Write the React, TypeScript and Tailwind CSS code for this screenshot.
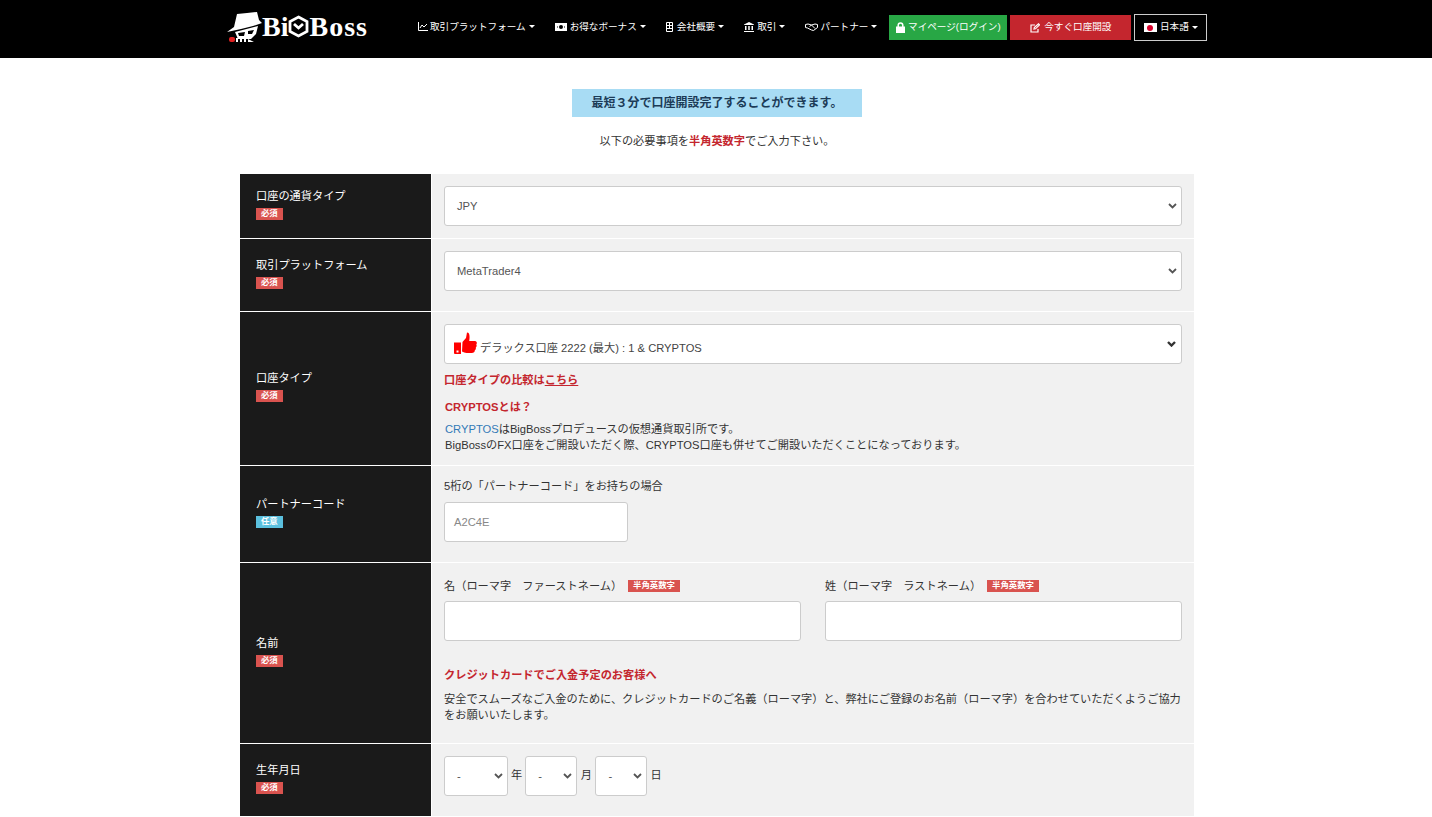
const font = "font-['Liberation_Sans','Noto_Sans_CJK_JP',sans-serif]";

function Badge({ children, color = "bg-[#d9534f]" }: { children: React.ReactNode; color?: string }) {
  return (
    <span className={`${color} inline-block h-[12px] px-[5px] text-[8.4px] leading-[11px] font-bold text-white`}>
      {children}
    </span>
  );
}

function Caret() {
  return <span className="ml-[3px] inline-block h-0 w-0 border-x-[3px] border-t-[3px] border-x-transparent border-t-white align-middle" />;
}

function NavItem({ icon, label }: { icon: React.ReactNode; label: string }) {
  return (
    <a className="flex items-center text-[9.6px] text-white">
      {icon}
      {label}
      <Caret />
    </a>
  );
}

function Chevron({ dark }: { dark?: boolean }) {
  return (
    <svg width="9" height="6" viewBox="0 0 9 6" fill="none" stroke={dark ? "#333333" : "#555555"} strokeWidth={dark ? 2.4 : 1.8}>
      <path d="M1 1l3.500 3.500L8 1" />
    </svg>
  );
}

function Select({ value, w = "" }: { value: string; w?: string }) {
  return (
    <div className={`${w} flex h-10 items-center justify-between rounded-[3px] border border-[#cccccc] bg-white pl-[12px] pr-[4px] text-[11.2px] text-[#555555]`}>
      <span>{value}</span>
      <Chevron />
    </div>
  );
}

function Row({ label, badge, children, h, optional }: { label: string; badge: string; children: React.ReactNode; h: string; optional?: boolean }) {
  return (
    <div className={`flex ${h} border-b border-white`}>
      <div className="flex w-[191px] shrink-0 flex-col justify-center bg-[#1a1a1a] pb-[4px] pl-[16px]">
        <div className="mb-[5px] text-[11.2px] leading-[14px] text-white">{label}</div>
        <div className="flex leading-none">
          <Badge color={optional ? "bg-[#5bc0de]" : "bg-[#d9534f]"}>{badge}</Badge>
        </div>
      </div>
      <div className="ml-px flex-1 bg-[#f1f1f1] px-[12px] pt-[12px]">{children}</div>
    </div>
  );
}

export default function App() {
  return (
    <div className={`${font} h-[817px] w-full overflow-hidden bg-white text-[#333333]`}>
      <header className="flex h-[58px] items-center bg-black">
        <div className="ml-[227px] flex w-[140px] items-center pb-[5px]">
          <svg width="35" height="32" viewBox="0 0 35 32" className="shrink-0">
            <path d="M10 3 L20 2 L30 1 L32 9 L35 12 L26 15 L14 18 L0 21 L7 16 Z" fill="#fff" />
            <path d="M8 21 L31 15 L29 23 L24 28 L11 28 Z" fill="#fff" />
            <path d="M11 22 L18 21 L17 25 L12 25 Z M21 20 L27 19 L25 23 L21 23 Z" fill="#000" />
            <rect x="2" y="26" width="6" height="5" rx="2" fill="#e02020" />
            <path d="M9 27h2v4H9zM13 28h2v3h-2zM17 28h2v3h-2zM21 28l6 3h-6z" fill="#fff" />
          </svg>
          <span className="font-['Liberation_Serif'] text-[28px] font-bold leading-none text-white">Bi</span>
          <svg width="21" height="23" viewBox="0 0 21 23" className="shrink-0">
            <path d="M10.500 2 L19 6.500 L19 16.500 L10.500 21 L2 16.500 L2 6.500 Z M6 9 L10.500 13 L15 9" fill="none" stroke="#fff" strokeWidth="2.800" />
          </svg>
          <span className="font-['Liberation_Serif'] text-[28px] font-bold leading-none tracking-[1px] text-white">Boss</span>
        </div>
        <nav className="ml-[51px] flex items-center pb-[3px]">
          <div className="mb-[1px] flex items-center gap-[20px]">
            <NavItem
              label="取引プラットフォーム"
              icon={
                <svg width="10" height="9" viewBox="0 0 10 9" fill="none" stroke="#fff" className="mr-[2px]">
                  <path d="M.5 0v8.500H10M2 6l2-3 2 2 3-3" />
                </svg>
              }
            />
            <NavItem
              label="お得なボーナス"
              icon={
                <svg width="12" height="8" viewBox="0 0 12 8" className="mr-[3px]">
                  <path d="M0 0h12v8H0z" fill="#fff" />
                  <circle cx="6" cy="4" r="2" fill="#000" />
                  <path d="M2 3.500h1v1H2zM9 3.500h1v1H9z" fill="#000" />
                </svg>
              }
            />
            <NavItem
              label="会社概要"
              icon={
                <svg width="7" height="10" viewBox="0 0 7 10" className="mr-[4px]" fill="none" stroke="#fff">
                  <path d="M.5.500h6v9h-6zM.5 3.500h6M.5 6.500h6M3.500.500v6" />
                </svg>
              }
            />
            <NavItem
              label="取引"
              icon={
                <svg width="10" height="10" viewBox="0 0 10 10" fill="#fff" className="mr-[3px]">
                  <path d="M5 0l5 2.500V3H0v-.5zM1 4h1.500v4H1zM4.250 4h1.500v4h-1.500zM7.500 4H9v4H7.500zM0 9h10v1H0z" />
                </svg>
              }
            />
            <NavItem
              label="パートナー"
              icon={
                <svg width="13" height="8" viewBox="0 0 13 8" fill="none" stroke="#fff" className="mr-[2px]">
                  <path d="M.5 1.500L3 1l3.500 1L10 1l2.500.5v3L8.500 7.500 6.500 7 2.500 5 .5 4.500zM4.500 3.500l2-1.500 3.500 3.500" />
                </svg>
              }
            />
          </div>
          <a className="ml-[12px] flex h-[25px] w-[118px] items-center justify-center bg-[#28a745] text-[9.6px] text-white">
            <svg width="9" height="11" viewBox="0 0 9 11" className="mr-[3px]">
              <path d="M0 4.500h9V11H0z" fill="#fff" />
              <path d="M2.200 5V3.200a2.300 2.300 0 0 1 4.600 0V5" fill="none" stroke="#fff" strokeWidth="1.500" />
            </svg>
            マイページ(ログイン)
          </a>
          <a className="ml-[3px] flex h-[25px] w-[121px] items-center justify-center bg-[#c4262e] text-[9.6px] text-white">
            <svg width="10" height="10" viewBox="0 0 10 10" className="mr-[4px]" fill="none" stroke="#fff" strokeWidth="1.200">
              <path d="M8 6v3H1V2h4M4 6l.3-1.500L8.500.8 9.500 1.800 5.500 5.800z" />
            </svg>
            今すぐ口座開設
          </a>
          <a className="ml-[3px] flex h-[27px] w-[73px] items-center justify-center border border-[#cccccc] text-[9.6px] text-white">
            <span className="mr-[3px] flex h-[9px] w-[13px] items-center justify-center bg-white">
              <span className="h-[6px] w-[6px] rounded-full bg-[#d8002a]" />
            </span>
            日本語
            <Caret />
          </a>
        </nav>
      </header>

      <main className="ml-[240px] w-[954px]">
        <div className="flex flex-col items-center pt-[31px]">
          <div className="flex h-[28px] w-[290px] items-center justify-center bg-[#a8dcf4] text-[12px] font-bold text-[#1c3b57]">
            最短３分で口座開設完了することができます。
          </div>
          <p className="mt-[16px] text-[11.2px] leading-[16px]">
            以下の必要事項を<strong className="text-[#c4262e]">半角英数字</strong>でご入力下さい。
          </p>
        </div>

        <div className="mt-[25px]">
          <Row label="口座の通貨タイプ" badge="必須" h="h-[65px]">
            <Select value="JPY" />
          </Row>
          <Row label="取引プラットフォーム" badge="必須" h="h-[73px]">
            <Select value="MetaTrader4" />
          </Row>
          <Row label="口座タイプ" badge="必須" h="h-[154px]">
            <div className="flex h-10 items-center justify-between rounded-[3px] border border-[#cccccc] bg-white pl-[9px] pr-[5px] text-[11.2px] text-[#444444]">
              <span className="flex items-center">
                <svg width="23" height="23" viewBox="0 0 23 23" className="mr-[3px] mt-[-1px]">
                  <path d="M0 10.500h7V22H1a1 1 0 0 1-1-1z" fill="#ff0000" />
                  <path d="M2.500 18.500h2v2h-2z" fill="#fff" />
                  <path d="M8.500 10l3.500-4 1-5.500c2.500 0 3 3 2.200 8.500H21c2 0 2.300 2.500 1.300 3.500.7 1.200.3 2.400-.5 3 .3 1.200-.2 2.200-1 2.700.2 2-1 2.800-3 2.800h-5.300c-1.500 0-3-.8-4.500-1.500z" fill="#ff0000" />
                </svg>
                <span className="mt-[8px]">デラックス口座 2222 (最大) : 1 &amp; CRYPTOS</span>
              </span>
              <Chevron dark />
            </div>
            <p className="mt-[8px] text-[11.2px] font-bold leading-[16px] text-[#c4262e]">
              口座タイプの比較は<a className="underline">こちら</a>
            </p>
            <p className="ml-[1px] mt-[11px] text-[11.2px] font-bold leading-[16px] text-[#c4262e]">CRYPTOSとは？</p>
            <p className="ml-[1px] mt-[6px] text-[11.2px] leading-[16px] text-[#333333]">
              <a className="text-[#337ab7]">CRYPTOS</a>はBigBossプロデュースの仮想通貨取引所です。
              <br />
              BigBossのFX口座をご開設いただく際、CRYPTOS口座も併せてご開設いただくことになっております。
            </p>
          </Row>
          <Row label="パートナーコード" badge="任意" h="h-[97px]" optional>
            <p className="text-[11.2px] leading-[16px]">5桁の「パートナーコード」をお持ちの場合</p>
            <div className="mt-[8px] flex h-10 w-[184px] items-center rounded-[3px] border border-[#cccccc] bg-white pl-[9px] text-[11.2px] text-[#888888]">
              A2C4E
            </div>
          </Row>
          <Row label="名前" badge="必須" h="h-[181px]">
            <div className="flex gap-[24px]">
              <div className="flex-1">
                <div className="mt-[3px] flex h-[16px] items-center text-[11.2px]">
                  名（ローマ字　ファーストネーム）
                  <span className="ml-[6px] flex"><Badge>半角英数字</Badge></span>
                </div>
                <div className="mt-[7px] h-10 rounded-[3px] border border-[#cccccc] bg-white" />
              </div>
              <div className="flex-1">
                <div className="mt-[3px] flex h-[16px] items-center text-[11.2px]">
                  姓（ローマ字　ラストネーム）
                  <span className="ml-[6px] flex"><Badge>半角英数字</Badge></span>
                </div>
                <div className="mt-[7px] h-10 rounded-[3px] border border-[#cccccc] bg-white" />
              </div>
            </div>
            <p className="mt-[26px] text-[11.2px] font-bold leading-[16px] text-[#c4262e]">クレジットカードでご入金予定のお客様へ</p>
            <p className="mt-[8px] text-[11.2px] leading-[16px]">
              安全でスムーズなご入金のために、クレジットカードのご名義（ローマ字）と、弊社にご登録のお名前（ローマ字）を合わせていただくようご協力をお願いいたします。
            </p>
          </Row>
          <Row label="生年月日" badge="必須" h="h-[73px]">
            <div className="flex items-start text-[11.2px]">
              <Select value="-" w="w-[64px]" />
              <span className="mx-[3px] mt-[11px] leading-[16px]">年</span>
              <Select value="-" w="w-[52px]" />
              <span className="mx-[3.5px] mt-[11px] leading-[16px]">月</span>
              <Select value="-" w="w-[52px]" />
              <span className="mx-[3px] mt-[11px] leading-[16px]">日</span>
            </div>
          </Row>
        </div>
      </main>
    </div>
  );
}
